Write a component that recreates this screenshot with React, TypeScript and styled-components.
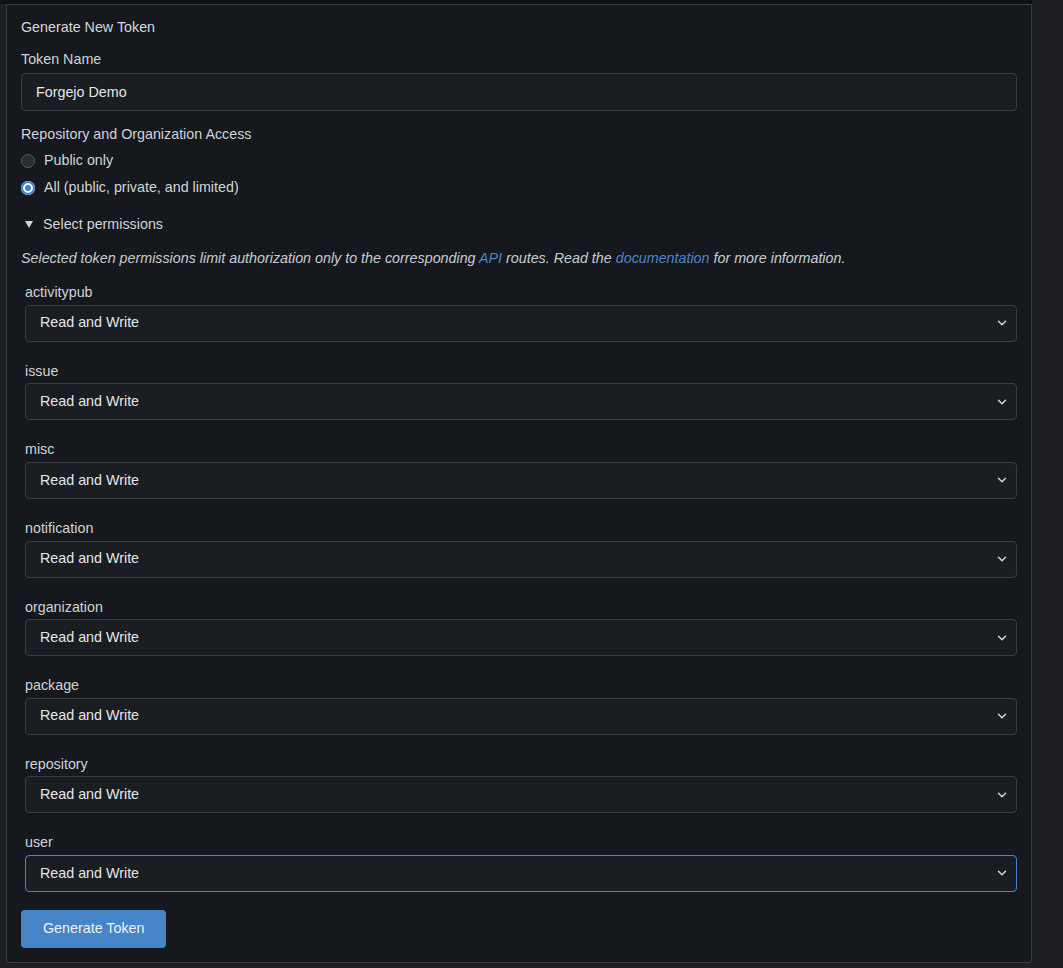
import React from 'react';
import styled, { createGlobalStyle } from 'styled-components';
import { ChevronDown } from 'lucide-react';

const scopes = [
  'activitypub',
  'issue',
  'misc',
  'notification',
  'organization',
  'package',
  'repository',
  'user',
];

export default function App() {
  return (
    <>
      <GlobalStyle />
      <Page>
        <TopStrip />
        <Panel>
          <Heading>Generate New Token</Heading>
          <Label>Token Name</Label>
          <TextInput defaultValue='Forgejo Demo' />

          <SectionLabel>Repository and Organization Access</SectionLabel>
          <RadioList>
            <RadioRow>
              <Radio type='radio' name='access' />
              Public only
            </RadioRow>
            <RadioRow>
              <Radio type='radio' name='access' defaultChecked />
              All (public, private, and limited)
            </RadioRow>
          </RadioList>

          <Summary>
            <svg width='8' height='7' viewBox='0 0 8 7'>
              <polygon points='0,0 8,0 4,7' fill='#d2d5da' />
            </svg>
            Select permissions
          </Summary>

          <Help>
            Selected token permissions limit authorization only to the corresponding <Link>API</Link> routes. Read the{' '}
            <Link>documentation</Link> for more information.
          </Help>

          <FieldList>
            {scopes.map((scope) => (
              <Field key={scope}>
                <ScopeLabel>{scope}</ScopeLabel>
                <SelectWrapper>
                  <Select defaultValue='rw' $focused={scope === 'user'}>
                    <option value='none'>No Access</option>
                    <option value='r'>Read</option>
                    <option value='rw'>Read and Write</option>
                  </Select>
                  <Chevron>
                    <ChevronDown size={14} strokeWidth={2.6} />
                  </Chevron>
                </SelectWrapper>
              </Field>
            ))}
          </FieldList>

          <PrimaryButton>Generate Token</PrimaryButton>
        </Panel>
      </Page>
    </>
  );
}

const GlobalStyle = createGlobalStyle`
  html, body {
    margin: 0;
    background: #1d1f24;
  }

  body {
    font-family: "Liberation Sans", Arial, sans-serif;
    font-size: 14.3px;
    line-height: 19.6px;
    color: #d2d5da;
    color-scheme: dark;
  }

  * {
    box-sizing: border-box;
  }
`;

const Page = styled.div`
  display: flex;
  flex-direction: column;

  width: 1032px;
  height: 968px;
  overflow: hidden;
`;

const TopStrip = styled.div`
  flex-shrink: 0;
  height: 4px;
  background: #0f1114;
`;

const Panel = styled.div`
  display: flex;
  flex-direction: column;
  align-items: flex-start;
  flex-shrink: 0;

  width: 1026px;
  min-height: 959px;
  margin-left: 6px;
  padding: 13px 14px 12px;

  background: #15181c;
  border: 1px solid #383c43;
  border-radius: 0 0 3px 3px;

  & > * {
    flex-shrink: 0;
  }
`;

const Heading = styled.div`
  margin-bottom: 12px;
  color: #d4d7dc;
`;

const Label = styled.div`
  margin-bottom: 4px;
  color: #d0d3d8;
`;

const TextInput = styled.input`
  width: 100%;
  height: 38px;
  padding: 0 14px;

  font: inherit;
  color: #e4e7eb;
  background: #1a1d21;
  border: 1px solid #383c43;
  border-radius: 4px;
  outline: none;
`;

const SectionLabel = styled.div`
  margin-top: 14px;
  color: #d0d3d8;
`;

const RadioList = styled.div`
  display: flex;
  flex-direction: column;
  gap: 8px;
  margin-top: 6px;
`;

const RadioRow = styled.label`
  display: flex;
  align-items: center;
  gap: 9px;

  color: #d2d5da;
`;

const Radio = styled.input`
  width: 14px;
  height: 14px;
  margin: 0;

  appearance: none;
  background: #2b2d33;
  border: 1px solid #55585f;
  border-radius: 50%;

  &:checked {
    background: #3b83d1;
    border: none;
    box-shadow: inset 0 0 0 2px #3b83d1, inset 0 0 0 4px #f2f5f9;
  }
`;

const Summary = styled.div`
  display: flex;
  align-items: center;
  gap: 10px;

  margin-top: 17px;
  padding-left: 4px;

  color: #d2d5da;
`;

const Help = styled.p`
  margin: 14px 0 0;

  font-style: italic;
  color: #c9cdd3;
`;

const Link = styled.a`
  color: #4a87c9;
  text-decoration: none;
`;

const FieldList = styled.div`
  display: flex;
  flex-direction: column;
  gap: 20px;

  width: 100%;
  margin-top: 15px;
  padding-left: 4px;
`;

const Field = styled.div`
  display: flex;
  flex-direction: column;
`;

const ScopeLabel = styled.div`
  margin-bottom: 2px;
  color: #d0d3d8;
`;

const SelectWrapper = styled.div`
  position: relative;
`;

const Select = styled.select<{ $focused?: boolean }>`
  width: 100%;
  height: 37px;
  padding: 0 30px 0 14px;

  font: inherit;
  color: #e4e7eb;
  background: #1a1d21;
  border: 1px solid ${({ $focused }) => ($focused ? '#3f85d3' : '#383c43')};
  border-radius: 4px;
  outline: none;
  appearance: none;
`;

const Chevron = styled.span`
  position: absolute;
  top: 50%;
  right: 8px;

  display: flex;
  color: #cfd2d7;
  transform: translateY(-50%);
  pointer-events: none;
`;

const PrimaryButton = styled.button`
  height: 38px;
  margin-top: 18px;
  padding: 0 22px;

  font: inherit;
  color: #eef2f7;
  background: #4585c8;
  border: none;
  border-radius: 4px;
`;
